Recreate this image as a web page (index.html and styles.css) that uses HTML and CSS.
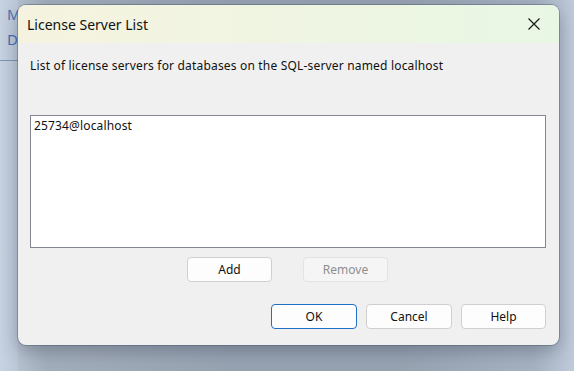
FILE: index.html
```html
<!DOCTYPE html>
<html>
<head>
<meta charset="utf-8">
<link rel="stylesheet" href="styles.css">
</head>
<body>
<div class="desk">
  <div class="behind">
    <div class="bl">M</div>
    <div class="bl">D</div>
    <div class="bline"></div>
  </div>
  <div class="dialog">
    <div class="titlebar">
      <span class="title">License Server List</span>
      <svg class="close" width="12" height="12" viewBox="0 0 12 12"><path d="M0.5 0.5 L11.5 11.5 M11.5 0.5 L0.5 11.5" stroke="#1a1a1a" stroke-width="1.2" fill="none"/></svg>
    </div>
    <div class="body">
      <div class="desc">List of license servers for databases on the SQL-server named localhost</div>
      <div class="list"><div class="item">25734@localhost</div></div>
      <div class="row1">
        <button class="btn">Add</button>
        <button class="btn dis">Remove</button>
      </div>
      <div class="row2">
        <button class="btn def">OK</button>
        <button class="btn wide">Cancel</button>
        <button class="btn">Help</button>
      </div>
    </div>
  </div>
</div>
</body>
</html>
```
FILE: styles.css
```css
html, body { margin: 0; padding: 0; }
body {
  width: 574px; height: 371px; overflow: hidden;
  font-family: "Noto Sans", "Segoe UI", sans-serif;
  background: linear-gradient(90deg, #c3cedc 0%, #a3aebc 8%, #98a3b2 40%, #98a3b2 70%, #a6b2c1 93%, #bfcbdb 100%);
}
.desk { position: relative; width: 574px; height: 371px; }
.behind {
  position: absolute; left: 0; top: 0; width: 18px; height: 371px;
  background: linear-gradient(90deg, #c7d3e1, #bcc8d8);
}
.bl { color: #4a6db5; font-size: 15px; padding-left: 7px; line-height: 25px; height: 25px; }
.bl:first-child { margin-top: 2px; }
.bline { margin-top: 8px; height: 1px; width: 18px; background: #7f93b3; }
.dialog {
  position: absolute; left: 18px; top: 5px; width: 541px; height: 340px;
  background: #f0f0f0; border-radius: 8px; overflow: hidden;
  box-shadow: 0 0 0 1px rgba(80,90,110,0.45), 0 6px 18px rgba(40,50,70,0.35);
}
.titlebar {
  height: 38px; display: flex; align-items: center; justify-content: space-between;
  background: linear-gradient(90deg, #f5f3df 0%, #eff5e2 50%, #e8f7e4 100%);
  padding: 0 10px 0 9px;
}
.title { font-size: 14px; color: #111; }
.close { margin-right: 9px; }
.body { padding: 0 13px 0 12px; }
.desc { font-size: 12px; color: #111; margin-top: 14px; line-height: 17px; letter-spacing: 0.18px; }
.list {
  margin-top: 41px; height: 131px; background: #fff; border: 1px solid #828790;
}
.item { font-size: 12px; color: #111; padding: 2px 0 0 3px; line-height: 15px; letter-spacing: 0.15px; }
.row1 { display: flex; gap: 31px; margin-top: 9px; padding-left: 157px; }
.row2 { display: flex; gap: 9px; margin-top: 22px; justify-content: flex-end; }
.btn {
  width: 85px; height: 25px; background: #fdfdfd; border: 1px solid #d0d0d0; border-radius: 4px;
  font-family: inherit; font-size: 12px; color: #111; padding: 0;
}
.btn.dis { background: #f5f5f5; border-color: #e3e3e3; color: #8e8e8e; }
.btn.def { border-color: #1f6fc4; width: 86px; }
.btn.wide { width: 86px; }
```
